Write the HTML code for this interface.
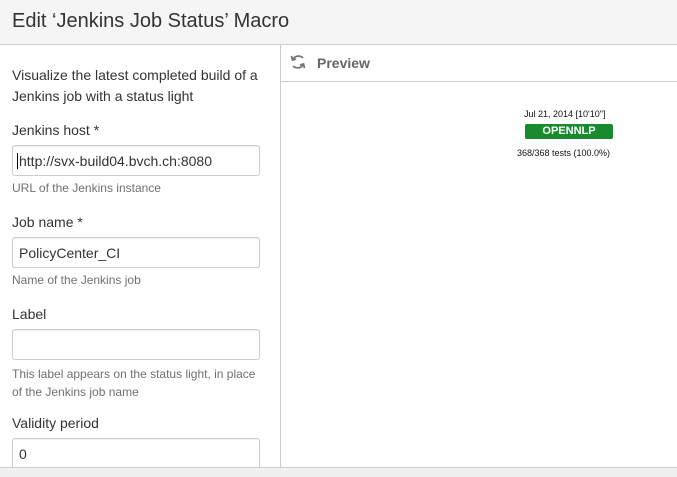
<!DOCTYPE html>
<html><head><meta charset="utf-8"><style>
*{margin:0;padding:0;box-sizing:border-box}
body{width:677px;height:477px;overflow:hidden;background:#fff;font-family:"Liberation Sans",Arial,sans-serif;color:#333;position:relative}
.a{position:absolute;white-space:nowrap}
.hdr{position:absolute;left:0;top:0;width:677px;height:45px;background:#f5f5f5;border-bottom:1px solid #ccc}
.inp{position:absolute;left:12px;width:248px;height:31px;border:1px solid #ccc;border-radius:3px;background:#fff;font-size:14px;padding:7px 0 0 6px;box-shadow:inset 0 1px 1px rgba(0,0,0,.06)}
.lbl{font-size:14px;color:#333}
.hint{font-size:12px;color:#707070}
</style></head><body>
<div class="hdr"></div>
<div class="a" style="left:12px;top:10px;font-size:20px;color:#333">Edit ‘Jenkins Job Status’ Macro</div>
<div style="position:absolute;left:280px;top:45px;width:1px;height:422px;background:#ccc"></div>
<div style="position:absolute;left:281px;top:81px;width:396px;height:1px;background:#ccc"></div>
<svg class="a" style="left:290px;top:54px" width="16" height="16" viewBox="0 0 16 16" fill="none" stroke="#777" stroke-width="1.8"><path d="M13 4 A6.5 6.5 0 0 0 3 5"/><path d="M1.5 2 L2.5 6 L6 5"/><path d="M3 12 A6.5 6.5 0 0 0 13 11"/><path d="M14.5 14 L13.5 10 L10 11"/></svg>
<div class="a" style="left:317px;top:55px;font-size:14px;font-weight:bold;color:#666">Preview</div>
<div class="a" style="left:524px;top:109px;font-size:9px;color:#111">Jul 21, 2014 [10'10"]</div>
<div class="a" style="left:525px;top:124px;width:88px;height:15px;background:#1a8a2e;border-radius:2px;color:#fff;font-weight:bold;font-size:11px;text-align:center;line-height:15px">OPENNLP</div>
<div class="a" style="left:517px;top:148px;font-size:9px;color:#111">368/368 tests (100.0%)</div>
<div class="a lbl" style="left:12px;top:65px;line-height:21px">Visualize the latest completed build of a<br>Jenkins job with a status light</div>
<div class="a lbl" style="left:12px;top:122px">Jenkins host *</div>
<div class="inp" style="top:145px"><span style="border-left:1px solid #000;margin-left:-2px;padding-left:1px">http://svx-build04.bvch.ch:8080</span></div>
<div class="a hint" style="left:12px;top:181px">URL of the Jenkins instance</div>
<div class="a lbl" style="left:12px;top:214px">Job name *</div>
<div class="inp" style="top:237px">PolicyCenter_CI</div>
<div class="a hint" style="left:12px;top:273px">Name of the Jenkins job</div>
<div class="a lbl" style="left:12px;top:306px">Label</div>
<div class="inp" style="top:329px"></div>
<div class="a hint" style="left:12px;top:365px;line-height:18px">This label appears on the status light, in place<br>of the Jenkins job name</div>
<div class="a lbl" style="left:12px;top:415px">Validity period</div>
<div class="inp" style="top:438px">0</div>
<div style="position:absolute;left:0;top:467px;width:677px;height:10px;background:#f0f0f0;border-top:1px solid #ccc"></div>
</body></html>
